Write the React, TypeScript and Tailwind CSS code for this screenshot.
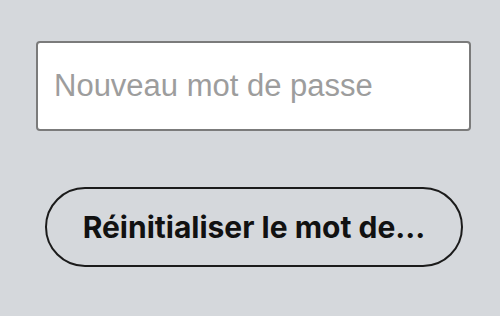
import React from 'react';

export default function App() {
  return (
    <div className="h-[316px] w-[500px] bg-[#d5d8dc] pt-[41px] pl-[36px] pr-[29px]">
      <input
        type="password"
        placeholder="Nouveau mot de passe"
        className="block h-[90px] w-[435px] rounded-[4px] border-2 border-[#7b7b7b] bg-white px-[16px] text-[31px] text-black outline-none placeholder:text-[#9d9d9d]"
        style={{ fontFamily: '"Liberation Sans", Arial, sans-serif' }}
      />
      <div className="pt-[56px] pl-[9px]">
        <button
          className="flex h-[80px] w-[418px] items-center justify-center rounded-full border-2 border-[#1b1b1b] px-[24px] text-[30px] font-bold text-[#111]"
          style={{ fontFamily: 'Inter, "Liberation Sans", sans-serif' }}
        >
          <span className="whitespace-nowrap">Réinitialiser le mot de...</span>
        </button>
      </div>
    </div>
  );
}
